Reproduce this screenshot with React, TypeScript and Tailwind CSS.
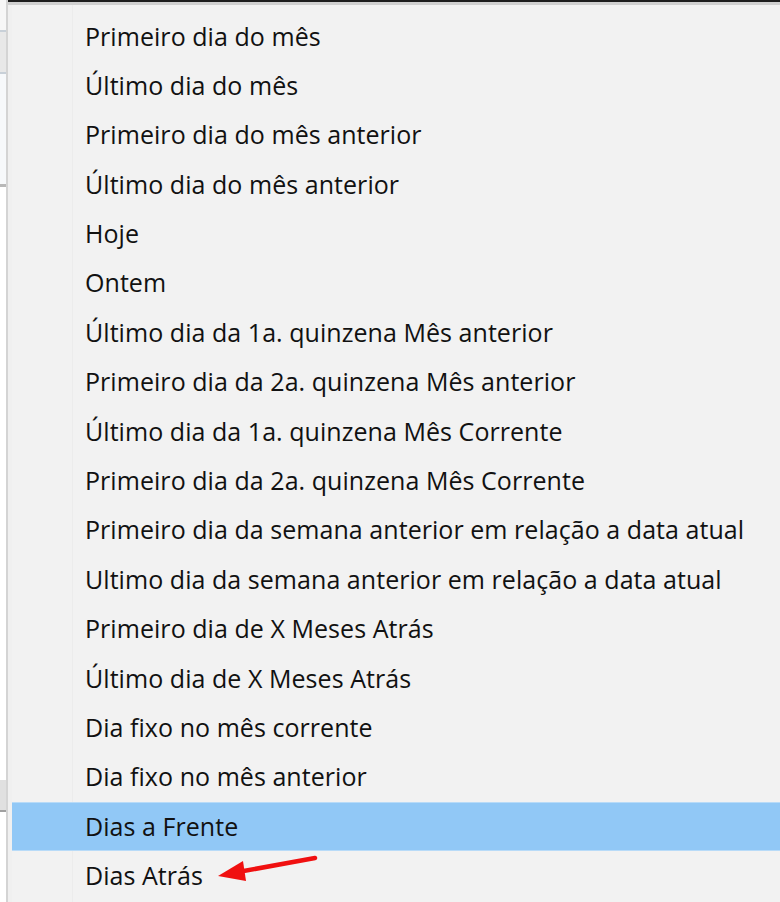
const items = [
  'Primeiro dia do mês',
  'Último dia do mês',
  'Primeiro dia do mês anterior',
  'Último dia do mês anterior',
  'Hoje',
  'Ontem',
  'Último dia da 1a. quinzena Mês anterior',
  'Primeiro dia da 2a. quinzena Mês anterior',
  'Último dia da 1a. quinzena Mês Corrente',
  'Primeiro dia da 2a. quinzena Mês Corrente',
  'Primeiro dia da semana anterior em relação a data atual',
  'Ultimo dia da semana anterior em relação a data atual',
  'Primeiro dia de X Meses Atrás',
  'Último dia de X Meses Atrás',
  'Dia fixo no mês corrente',
  'Dia fixo no mês anterior',
  'Dias a Frente',
  'Dias Atrás',
];

const App = () => {
  return (
    <div className="w-[780px] h-[902px] overflow-hidden bg-[#f2f2f2] flex" style={{ fontFamily: '"Open Sans", "Noto Sans", sans-serif' }}>
      {/* janela de fundo */}
      <div className="w-[6px] shrink-0 bg-white flex flex-col">
        <div className="h-[30px] bg-[#f7f7f7]" />
        <div className="h-[2px] bg-[#c8d0d8]" />
        <div className="h-[40px] bg-[#e8e8e8]" />
        <div className="h-[2px] bg-[#c8d0d8]" />
        <div className="h-[110px] bg-[#f7f9fb]" />
        <div className="h-[3px] bg-[#b8b8b8]" />
        <div className="flex-1 bg-white" />
        <div className="h-[30px] bg-[#e0e0e0]" />
        <div className="h-[2px] bg-[#a0a0a0]" />
        <div className="h-[90px] bg-white" />
      </div>
      <div className="w-[2px] shrink-0 bg-[#d4d4d4]" />

      {/* menu */}
      <div className="flex-1 flex flex-col relative">
        <div className="h-[2px] bg-[#1e1e1e]" />
        <div className="h-[3px] bg-[#d0d0d0]" />
        <div className="flex-1 flex">
          <div className="w-[4px] shrink-0 bg-[#f0f0f0]" />
          <div className="flex-1 flex flex-col pt-[6.6px] relative">
            <div className="absolute left-[60px] top-0 bottom-0 w-px bg-[#ececec]" />
            {items.map((label, i) => (
              <div
                key={label}
                className={
                  'h-[49.4px] shrink-0 flex items-center pl-[73px] text-[25px] tracking-[0.05px] text-[#111] relative ' +
                  (i === 16 ? 'bg-[#91c8f6] border-y border-[#b8dbf8]' : '')
                }
              >
                {label}
              </div>
            ))}
          </div>
        </div>

        {/* seta vermelha */}
        <svg className="absolute left-[204px] top-[852px]" width="112" height="32" viewBox="0 0 112 32">
          <line x1="103" y1="6" x2="26" y2="20" stroke="#f01010" strokeWidth="4.5" strokeLinecap="round" />
          <polygon points="6,24 31,9 34,29" fill="#f01010" />
        </svg>
      </div>
    </div>
  );
};

export default App;
